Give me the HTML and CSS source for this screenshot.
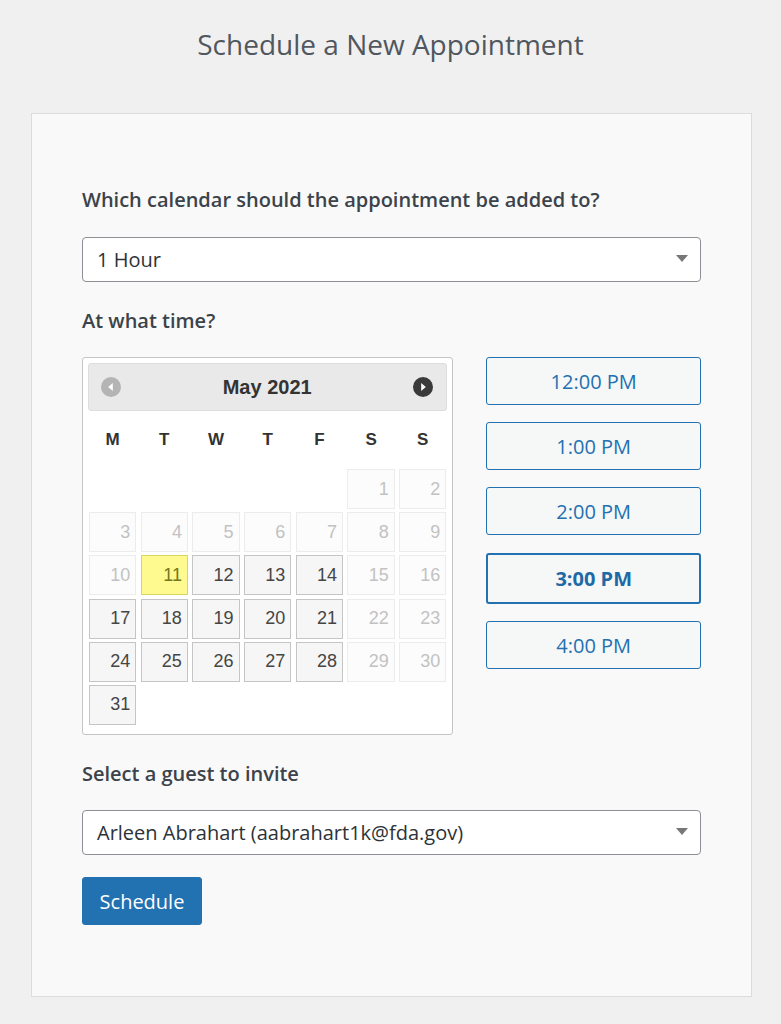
FILE: index.html
```html
<!DOCTYPE html>
<html>
<head>
<meta charset="utf-8">
<link rel="stylesheet" href="styles.css">
</head>
<body>
<h1 class="title">Schedule a New Appointment</h1>
<div class="card">
  <div class="label">Which calendar should the appointment be added to?</div>
  <div class="select"><span>1 Hour</span><span class="arrow"></span></div>
  <div class="label label-time">At what time?</div>
  <div class="picker-row">
    <div class="calendar">
      <div class="cal-header">
        <span class="nav nav-prev"><svg width="20" height="20" viewBox="0 0 20 20"><circle cx="10" cy="10" r="10" fill="#b4b4b4"/><path d="M11.8 6 L7.2 10 L11.8 14 Z" fill="#fff"/></svg></span>
        <span class="month">May 2021</span>
        <span class="nav nav-next"><svg width="20" height="20" viewBox="0 0 20 20"><circle cx="10" cy="10" r="10" fill="#3a3a3a"/><path d="M8.2 6 L12.8 10 L8.2 14 Z" fill="#fff"/></svg></span>
      </div>
      <div class="dow">
        <span>M</span><span>T</span><span>W</span><span>T</span><span>F</span><span>S</span><span>S</span>
      </div>
      <div class="days">
        <span class="empty"></span><span class="empty"></span><span class="empty"></span><span class="empty"></span><span class="empty"></span>
        <span class="day off">1</span><span class="day off">2</span>
        <span class="day off">3</span><span class="day off">4</span><span class="day off">5</span><span class="day off">6</span><span class="day off">7</span><span class="day off">8</span><span class="day off">9</span>
        <span class="day off">10</span><span class="day today">11</span><span class="day">12</span><span class="day">13</span><span class="day">14</span><span class="day off">15</span><span class="day off">16</span>
        <span class="day">17</span><span class="day">18</span><span class="day">19</span><span class="day">20</span><span class="day">21</span><span class="day off">22</span><span class="day off">23</span>
        <span class="day">24</span><span class="day">25</span><span class="day">26</span><span class="day">27</span><span class="day">28</span><span class="day off">29</span><span class="day off">30</span>
        <span class="day">31</span>
      </div>
    </div>
    <div class="times">
      <div class="time">12:00 PM</div>
      <div class="time">1:00 PM</div>
      <div class="time">2:00 PM</div>
      <div class="time selected">3:00 PM</div>
      <div class="time">4:00 PM</div>
    </div>
  </div>
  <div class="label label-guest">Select a guest to invite</div>
  <div class="select"><span>Arleen Abrahart (aabrahart1k@fda.gov)</span><span class="arrow"></span></div>
  <div class="btn">Schedule</div>
</div>
</body>
</html>
```

FILE: styles.css
```css
* { box-sizing: border-box; }
body {
  margin: 0;
  background: #f0f0f0;
  font-family: "Open Sans", "Noto Sans", sans-serif;
  color: #3c434a;
}
.title {
  margin: 0;
  padding-top: 24px;
  font-size: 28px;
  line-height: 40px;
  font-weight: 400;
  color: #50575e;
  text-align: center;
}
.card {
  margin: 49px 0 0 31px;
  width: 721px;
  border: 1px solid #dcdcde;
  background: #f9f9f9;
  padding: 72px 50px 71px;
}
.label {
  font-size: 20px;
  line-height: 28px;
  font-weight: 600;
  color: #3c434a;
  margin-bottom: 23px;
}
.label-time { margin-top: 25px; margin-bottom: 22px; }
.label-guest { margin-top: 25px; margin-bottom: 22px; }
.select {
  height: 45px;
  background: #fff;
  border: 1px solid #8c8f94;
  border-radius: 4px;
  display: flex;
  align-items: center;
  justify-content: space-between;
  padding: 0 12px 0 14px;
  font-size: 20px;
  color: #2c3338;
}
.arrow {
  width: 0;
  height: 0;
  border-left: 6px solid transparent;
  border-right: 6px solid transparent;
  border-top: 7px solid #777;
  margin-top: -2px;
}
.picker-row {
  display: flex;
  gap: 33px;
  align-items: flex-start;
}
.calendar {
  width: 372px;
  height: 378px;
  background: #fff;
  border: 1px solid #c5c5c5;
  border-radius: 3px;
  padding: 5px;
  font-family: "Liberation Sans", Arial, sans-serif;
}
.cal-header {
  height: 48px;
  background: #e9e9e9;
  border: 1px solid #dddddd;
  border-radius: 3px;
  display: flex;
  align-items: center;
  justify-content: space-between;
  padding: 0 13px 0 12px;
}
.nav { display: flex; }
.month {
  font-size: 20px;
  font-weight: 700;
  color: #333;
}
.dow {
  display: grid;
  grid-template-columns: repeat(7, 1fr);
  column-gap: 4.5px;
  margin: 0 1px;
  height: 58px;
  align-items: center;
  text-align: center;
  font-size: 17px;
  font-weight: 700;
  color: #333;
}
.days {
  display: grid;
  grid-template-columns: repeat(7, 1fr);
  column-gap: 4.5px;
  row-gap: 3.2px;
  margin: 0 1px;
}
.day {
  height: 40px;
  border: 1px solid #c5c5c5;
  background: #f6f6f6;
  color: #454545;
  font-size: 18px;
  display: flex;
  align-items: center;
  justify-content: flex-end;
  padding-right: 5px;
}
.empty { height: 40px; }
.day.off {
  border-color: #ececec;
  background: #fcfcfc;
  color: #c2c2c2;
}
.day.today {
  background: #fffa90;
  border-color: #dad55e;
  color: #777620;
}
.times {
  width: 215px;
  display: flex;
  flex-direction: column;
  gap: 17px;
}
.time {
  height: 48px;
  border: 1px solid #2271b1;
  border-radius: 3px;
  background: #f6f7f7;
  color: #2271b1;
  font-size: 20px;
  display: flex;
  align-items: center;
  justify-content: center;
}
.time.selected {
  margin-top: 1px;
  height: 51px;
  border-width: 2px;
  font-weight: 700;
  color: #1e6aa6;
}
.btn {
  margin-top: 22px;
  width: 120px;
  height: 48px;
  background: #2271b1;
  border: 1px solid #2271b1;
  border-radius: 3px;
  color: #fff;
  font-size: 20px;
  display: flex;
  align-items: center;
  justify-content: center;
}
```
